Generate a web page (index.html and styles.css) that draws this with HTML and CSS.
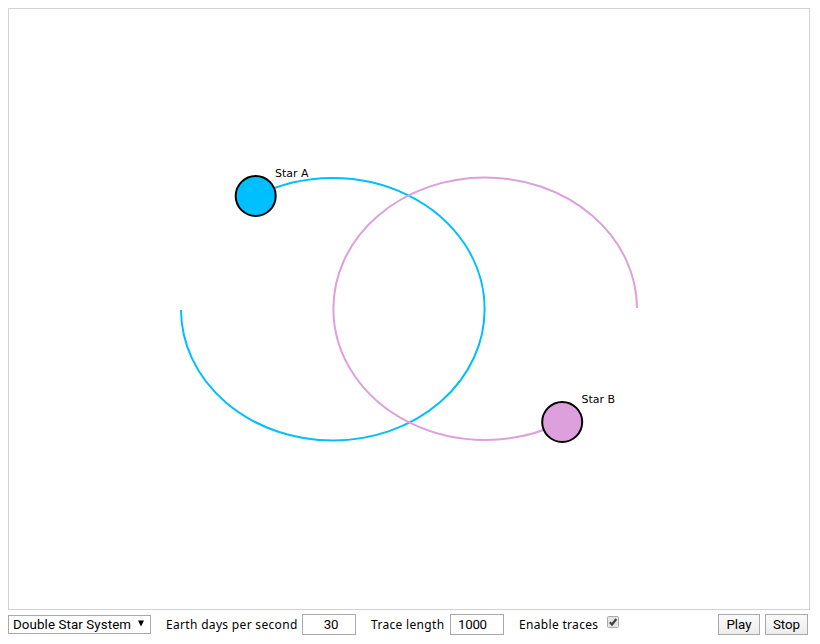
FILE: index.html
```
<!DOCTYPE html>
<html lang="en">
<head>
<meta charset="utf-8">
<title>Double Star System</title>
<link rel="stylesheet" href="styles.css">
</head>
<body>
<svg class="stage" viewBox="0 0 800 600">
  <path class="trace trace-a" d="M172 301A151.8 131 0 0 0 475.6 300A151.8 131 0 0 0 247 187"/>
  <path class="trace trace-b" d="M628 299A151.8 131 0 0 0 324.4 300A151.8 131 0 0 0 553 413"/>
  <circle class="star star-a" cx="246.7" cy="187" r="20"/>
  <circle class="star star-b" cx="553.2" cy="413" r="20"/>
  <text class="name" x="266" y="168" textLength="33.5">Star A</text>
  <text class="name" x="572.5" y="394" textLength="33.5">Star B</text>
</svg>
<form class="controls">
  <div class="select"><span class="select-text">Double Star System</span><svg class="arrow" viewBox="0 0 7 7"><path d="M0 0H7L3.5 7Z"/></svg></div>
  <label class="label days" for="days">Earth days per second</label>
  <input class="field centered" id="days" value="30">
  <label class="label length" for="length">Trace length</label>
  <input class="field" id="length" value="1000">
  <label class="label enable">Enable traces</label>
  <svg class="check" viewBox="0 0 12 12"><rect x=".5" y=".5" width="11" height="11" rx="1"/><path d="M2.8 6.2L5 8.5L9.3 3"/></svg>
  <button class="button play" type="button">Play</button>
  <button class="button" type="button">Stop</button>
</form>
</body>
</html>
```
FILE: styles.css
```
* { box-sizing: border-box; }
body { margin: 8px; background: #fff; color: #000; overflow: hidden; }
.stage { display: block; width: 802px; height: 602px; border: 1px solid #d3d3d3; }
.trace { fill: none; stroke-width: 2; }
.trace-a { stroke: #00bfff; }
.trace-b { stroke: #dda0dd; }
.star { stroke: #000; stroke-width: 2; }
.star-a { fill: #00bfff; }
.star-b { fill: #dda0dd; }
.name { font: 11px "DejaVu Sans", sans-serif; }
.controls { display: flex; align-items: center; width: 800px; height: 21px; margin-top: 4px; }
.select { display: flex; align-items: center; width: 143px; height: 19px; padding-left: 4px; border: 1px solid #a9a9a9; font: 13.33px/17px Roboto, sans-serif; }
.select-text { width: 125px; white-space: nowrap; letter-spacing: .1px; }
.arrow { width: 6px; height: 7px; margin-top: -2px; }
.label { flex: none; white-space: nowrap; font: 12px/21px "Noto Sans", sans-serif; letter-spacing: .32px; }
.days { width: 136px; margin-left: 15px; }
.length { width: 79px; margin-left: 15px; }
.enable { width: 88px; margin-left: 15px; }
.field { width: 54px; height: 21px; padding: 0 7px; border: 1px solid #a9a9a9; border-radius: 0; font: 13.33px Roboto, sans-serif; letter-spacing: -.3px; }
.centered { padding-left: 11px; text-align: center; }
.check { width: 12px; height: 12px; margin-top: -5px; }
.check rect { fill: #e5e5e5; stroke: #aaa; }
.check path { fill: none; stroke: #444; stroke-width: 2.2; }
.button { width: 43px; height: 21px; padding: 0; border: 1px solid #a9a9a9; border-radius: 0; background: linear-gradient(#fafafa, #ececec); font: 13.33px Roboto, sans-serif; letter-spacing: 0; }
.play { width: 42px; margin-left: auto; margin-right: 5px; }
```
